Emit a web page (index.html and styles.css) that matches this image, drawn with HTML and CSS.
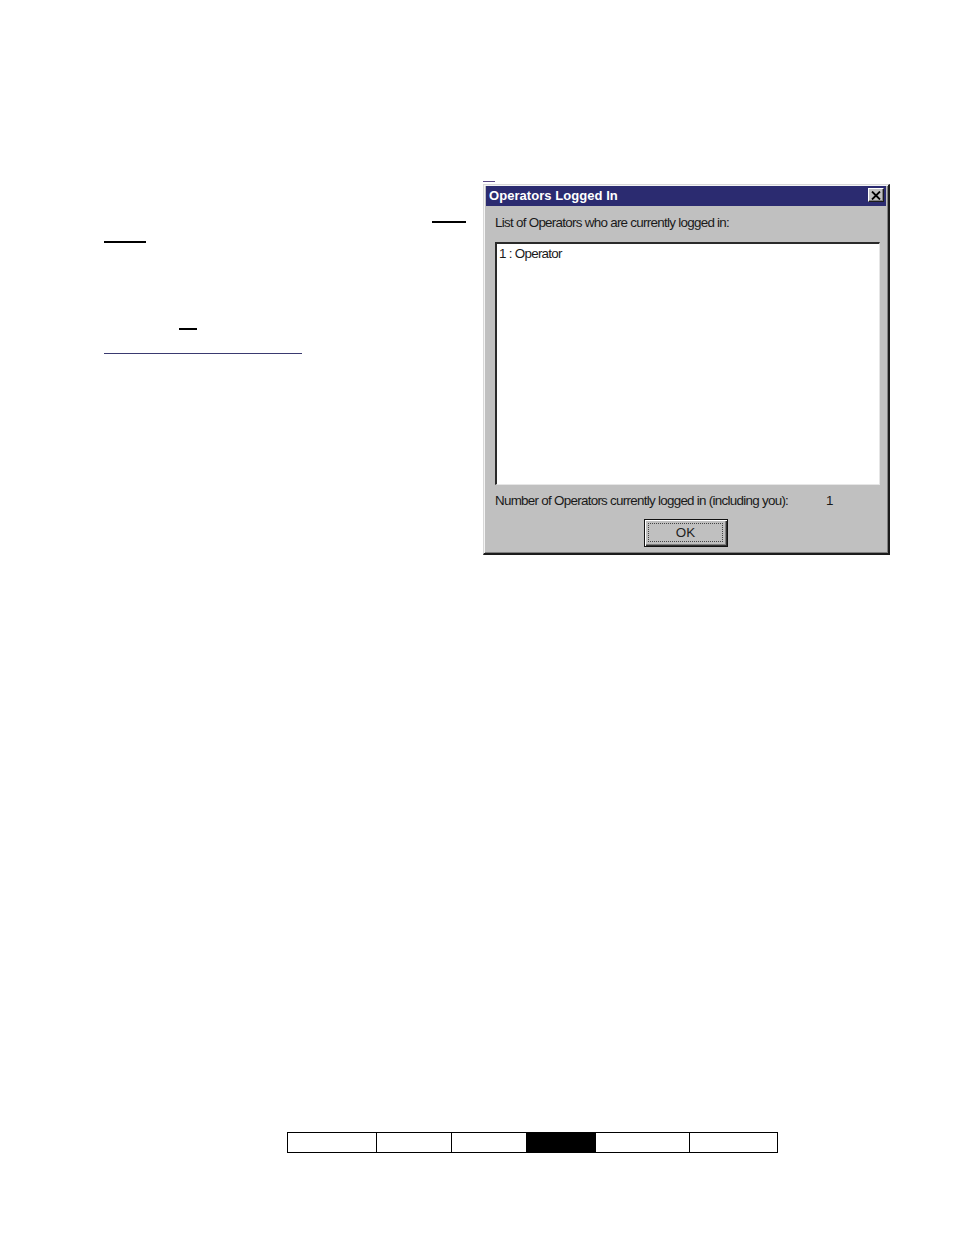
FILE: index.html
```html
<!DOCTYPE html>
<html>
<head>
<meta charset="utf-8">
<link rel="stylesheet" href="styles.css">
</head>
<body>
<div class="page">
  <div class="top-row">
    <div class="left-col">
      <div class="rule rule-a"></div>
      <div class="rule rule-b"></div>
      <div class="rule rule-c"></div>
      <div class="rule rule-d"></div>
    </div>
    <div class="dlg-wrap">
      <div class="tick"></div>
      <div class="dialog">
        <div class="titlebar">
          <span class="title">Operators Logged In</span>
          <span class="close-btn">
            <svg width="10" height="9" viewBox="0 0 10 9"><path d="M1 0.5 L9 8.5 M9 0.5 L1 8.5" stroke="#000" stroke-width="1.8" fill="none"/></svg>
          </span>
        </div>
        <div class="dlg-body">
          <div class="label">List of Operators who are currently logged in:</div>
          <div class="listbox">
            <div class="list-item">1 : Operator</div>
          </div>
          <div class="count-row">
            <span class="count-label">Number of Operators currently logged in (including you):</span>
            <span class="count-value">1</span>
          </div>
          <div class="btn-row">
            <div class="ok-btn"><div class="ok-focus">OK</div></div>
          </div>
        </div>
      </div>
    </div>
  </div>
  <div class="footer-bar">
    <div class="cell c1"></div>
    <div class="cell c2"></div>
    <div class="cell c3"></div>
    <div class="cell c4 dark"></div>
    <div class="cell c5"></div>
    <div class="cell c6"></div>
  </div>
</div>
</body>
</html>
```
FILE: styles.css
```css
html, body {
  margin: 0;
  padding: 0;
  background: #fff;
}
.page {
  width: 954px;
  height: 1235px;
  padding-top: 181px;
  box-sizing: border-box;
  font-family: "Liberation Sans", Arial, sans-serif;
}
.top-row {
  display: flex;
  align-items: flex-start;
}
.left-col {
  width: 483px;
  flex: none;
}
.rule {
  background: #000;
  height: 2px;
}
.rule-a { margin-top: 40px; margin-left: 432px; width: 34px; }
.rule-b { margin-top: 18px; margin-left: 104px; width: 42px; }
.rule-c { margin-top: 85px; margin-left: 179px; width: 18px; }
.rule-d { margin-top: 23px; margin-left: 104px; width: 198px; height: 1px; background: #3a3a70; }

.dlg-wrap {
  flex: none;
}
.tick {
  width: 12px;
  height: 1px;
  background: #5b4a86;
}
.dialog {
  margin-top: 2px;
  width: 407px;
  height: 371px;
  box-sizing: border-box;
  background: #c0c0c0;
  border-style: solid;
  border-width: 1px 2px 2px 1px;
  border-color: #d8d8d8 #1c1c1c #1c1c1c #d8d8d8;
  box-shadow: inset 1px 1px 0 #f4f4f4, inset -1px -1px 0 #808080;
  padding: 1px 2px 2px 2px;
  display: flex;
  flex-direction: column;
}
.titlebar {
  height: 20px;
  box-sizing: border-box;
  background: #2b2b70;
  display: flex;
  align-items: center;
  justify-content: space-between;
  padding: 0 2px 2px 3px;
}
.title {
  color: #fff;
  font-weight: bold;
  font-size: 13px;
  letter-spacing: 0.05px;
}
.close-btn {
  width: 16px;
  height: 14px;
  box-sizing: border-box;
  background: #c0c0c0;
  border-style: solid;
  border-width: 1px;
  border-color: #fff #1c1c1c #1c1c1c #fff;
  box-shadow: inset -1px -1px 0 #808080;
  display: flex;
  align-items: center;
  justify-content: center;
}
.dlg-body {
  padding: 10px 0 0 9px;
  display: flex;
  flex-direction: column;
  color: #1a1a1a;
  font-size: 13.4px;
  letter-spacing: -0.72px;
}
.label {
  height: 14px;
  line-height: 14px;
}
.listbox {
  margin-top: 12px;
  width: 385px;
  height: 243px;
  box-sizing: border-box;
  background: #fff;
  border-style: solid;
  border-width: 2px 1px 1px 2px;
  border-color: #2a2a2a #e6e6e6 #e6e6e6 #2a2a2a;
  padding: 3px 0 0 2px;
}
.list-item {
  line-height: 14px;
  height: 14px;
}
.count-row {
  margin-top: 9px;
  height: 14px;
  line-height: 14px;
  display: flex;
}
.count-label {
  width: 331px;
  flex: none;
}
.btn-row {
  margin-top: 11px;
  display: flex;
  padding-left: 149px;
}
.ok-btn {
  width: 84px;
  height: 28px;
  box-sizing: border-box;
  border: 1px solid #111;
  background: #c0c0c0;
  box-shadow: inset 1px 1px 0 #fff, inset -1px -1px 0 #333, inset -2px -2px 0 #808080;
  padding: 3px 4px 4px 3px;
}
.ok-focus {
  height: 100%;
  box-sizing: border-box;
  border: 1px dotted #444;
  display: flex;
  align-items: center;
  justify-content: center;
  font-size: 13.4px;
  letter-spacing: 0;
  color: #222;
}
.footer-bar {
  margin-top: 577px;
  margin-left: 287px;
  display: flex;
  height: 21px;
}
.cell {
  box-sizing: border-box;
  height: 21px;
  border-top: 1px solid #000;
  border-bottom: 1px solid #000;
  border-left: 1px solid #000;
}
.c1 { width: 89px; }
.c2 { width: 75px; }
.c3 { width: 75px; }
.c4 { width: 69px; }
.c5 { width: 94px; }
.c6 { width: 89px; border-right: 1px solid #000; }
.dark { background: #000; }
```
